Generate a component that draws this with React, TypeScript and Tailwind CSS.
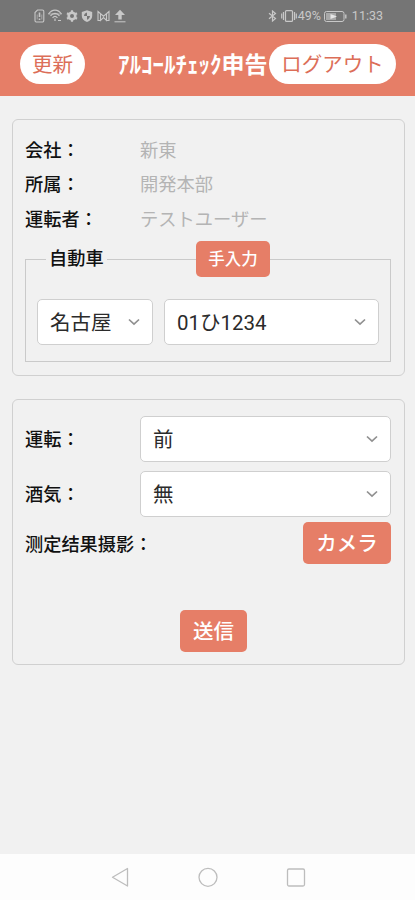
import type { ReactNode } from 'react';

interface SelectBoxProps {
  value: string;
  className?: string;
}

function SelectBox({ value, className = '' }: SelectBoxProps) {
  return (
    <button
      type="button"
      className={`flex h-[46px] items-center justify-between rounded-[5px] border border-[#cfcfcf] bg-white pl-3 pr-3 text-[20.5px] leading-none text-[#2b2b2b] ${className}`}
    >
      <span className="pt-0.5">{value}</span>
      <svg className="h-3 w-3" viewBox="0 0 12 12" fill="none" stroke="#909090" strokeWidth="1.7">
        <path d="M1 3.5 6 8.2 11 3.5" />
      </svg>
    </button>
  );
}

function Label({ children }: { children: ReactNode }) {
  return <div className="w-[115px] whitespace-nowrap pt-0.5 text-[18.2px] font-medium text-[#111]">{children}</div>;
}

const profile = [
  { label: '会社：', value: '新東' },
  { label: '所属：', value: '開発本部' },
  { label: '運転者：', value: 'テストユーザー' },
];

function StatusBar() {
  return (
    <div className="flex h-8 items-center justify-between bg-[#757575] pl-[34px] pr-8 text-[#c8c8c8]">
      <div className="flex items-center gap-[3px]">
        <svg className="h-3.5 w-[11px]" viewBox="0 0 11 14" fill="none" stroke="currentColor" strokeWidth="1.1">
          <path d="M3.5 1h4.8a1.5 1.5 0 0 1 1.5 1.5v9a1.5 1.5 0 0 1-1.5 1.5h-6A1.5 1.5 0 0 1 1 11.5V3.5z" />
          <path d="M5.5 3.5v4.5M5.5 9.5v1.5" strokeWidth="1.6" />
          <path d="M3.2 5.5v5M7.8 5.5v5" strokeWidth=".6" />
        </svg>
        <svg className="h-3.5 w-[14px]" viewBox="0 0 14 14" fill="none" stroke="currentColor" strokeWidth="1.2">
          <path d="M.5 5.2C4-.2 10-.2 13.5 5.2M2.5 7c2.5-3.6 6.5-3.6 9 0M4.6 8.8c1.4-1.8 3.4-1.8 4.8 0" />
          <path d="M.8 5h12.4" strokeWidth=".7" />
          <path d="M7 9.5v2.5M10 11.5h3" />
        </svg>
        <svg className="ml-px h-3 w-3" viewBox="0 0 12 12" fill="none" stroke="currentColor">
          <circle cx="6" cy="6" r="3.3" strokeWidth="2.6" />
          <path d="M6 .3v2M6 9.7v2M1 3.2 3 4.3M9 7.7l2 1.1M1 8.8 3 7.7M9 4.3l2-1.1" strokeWidth="2.2" />
        </svg>
        <svg className="h-3 w-3" viewBox="0 0 12 12">
          <path d="M6 .3 11.2 2v4c0 3-2 4.7-5.2 5.9C2.8 10.7.8 9 .8 6V2z" fill="currentColor" />
          <path d="M6 2.5v3.6H3C3.1 4.2 4.2 2.9 6 2.5M6 6.1h3C8.8 8 7.7 9.2 6 9.8z" fill="#757575" />
        </svg>
        <svg className="ml-px h-3 w-[13px]" viewBox="0 0 13 12" fill="none" stroke="currentColor" strokeWidth="1.1">
          <path d="M3.5 10.5H1v-9l5.5 4.7L12 1.5v9H9.5M3.5 4v6.5L6.5 7.5l3 3V4" />
        </svg>
        <svg className="ml-px h-3.5 w-3" viewBox="0 0 12 14">
          <path d="M6 .8 11 6H7.7v4.5H4.3V6H1z" fill="currentColor" />
          <path d="M.5 12.8h11" stroke="currentColor" strokeWidth="1" />
        </svg>
      </div>
      <div className="flex items-center font-[Roboto,'Liberation_Sans',sans-serif] text-[12.5px]">
        <svg className="h-3 w-[9px]" viewBox="0 0 9 12" fill="none" stroke="currentColor" strokeWidth="1.2">
          <path d="M1 3.2 7.5 8.5 4.5 11V1l3 2.5L1 8.8" />
        </svg>
        <svg className="ml-1 h-3 w-4" viewBox="0 0 16 12" fill="none" stroke="currentColor" strokeWidth="1.2">
          <rect x="4.5" y=".6" width="7" height="10.8" rx="1" />
          <path d="M2.5 2v8M.7 3.5v5M13.5 2v8M15.3 3.5v5" />
        </svg>
        <span className="ml-px">49%</span>
        <svg className="ml-[3px] h-[11px] w-[23px]" viewBox="0 0 23 11">
          <rect x=".5" y=".5" width="19.5" height="10" rx="2" fill="none" stroke="currentColor" />
          <rect x="2" y="2" width="10" height="7" fill="#a8a8a8" />
          <path d="M6.5 3 13 5.5 6.5 8z" fill="#e6e6e6" />
          <path d="M21.8 3.5v4" stroke="currentColor" strokeWidth="1.4" />
        </svg>
        <span className="ml-[5px]">11:33</span>
      </div>
    </div>
  );
}

export default function App() {
  return (
    <div className="flex h-[900px] w-[415px] flex-col overflow-hidden bg-[#f1f1f1] font-[Roboto,'Noto_Sans_CJK_JP',sans-serif]" lang="ja">
      <StatusBar />
      <header className="flex h-16 shrink-0 items-center bg-[#e67e67] pl-5 text-white">
        <button type="button" className="h-10 w-[65px] rounded-full bg-white pt-0.5 text-[20.5px] leading-none text-[#dc6e58]">
          更新
        </button>
        <h1 className="ml-[33px] w-[151px] whitespace-nowrap pt-0.5 text-[23px] font-bold leading-none">ｱﾙｺｰﾙﾁｪｯｸ申告</h1>
        <button type="button" className="h-10 w-[127px] rounded-full bg-white pt-0.5 text-[20.5px] leading-none text-[#dc6e58]">
          ログアウト
        </button>
      </header>

      <main className="flex flex-1 flex-col gap-[23px] pl-3 pr-2.5 pt-[23px]">
        <section className="h-[257px] rounded-[6px] border border-[#d0d0d0] pl-3 pr-[13px] pt-3">
          {profile.map((row) => (
            <div key={row.label} className="flex h-[34.5px] items-center">
              <Label>{row.label}</Label>
              <div className="pt-0.5 text-[18.3px] text-[#b4b4b4]">{row.value}</div>
            </div>
          ))}
          <fieldset className="mt-[5.5px] h-[121px] border border-[#cacaca] px-[11px]">
            <legend className="ml-[9px] flex w-[224px] items-center">
              <span className="px-[3px] text-[18.2px] font-medium leading-none text-[#111]">自動車</span>
              <span className="h-px flex-1 bg-[#cacaca]" />
              <button type="button" className="h-9 w-[74px] rounded-[5px] bg-[#e67e67] pt-0.5 text-[16.5px] font-medium leading-none text-white">
                手入力
              </button>
            </legend>
            <div className="mt-[22px] flex gap-[11px]">
              <SelectBox value="名古屋" className="w-[116px]" />
              <SelectBox value="01ひ1234" className="w-[215px]" />
            </div>
          </fieldset>
        </section>

        <section className="flex h-[266px] flex-col rounded-[6px] border border-[#d0d0d0] pl-3 pr-[13px] pt-4">
          <div className="flex items-center">
            <Label>運転：</Label>
            <SelectBox value="前" className="flex-1" />
          </div>
          <div className="mt-[9px] flex items-center">
            <Label>酒気：</Label>
            <SelectBox value="無" className="flex-1" />
          </div>
          <div className="mt-[5px] flex items-center justify-between">
            <Label>
              <span lang="zh-CN" className="font-['Noto_Sans_CJK_SC',sans-serif]">测定结果摄影</span>：
            </Label>
            <button type="button" className="h-[42px] w-[88px] rounded-[5px] bg-[#e67e67] pt-0.5 text-[20.5px] font-medium leading-none text-white">
              カメラ
            </button>
          </div>
          <button type="button" className="ml-[11px] mt-[46px] h-[42px] w-[67px] self-center rounded-[5px] bg-[#e67e67] pt-0.5 text-[20.5px] font-medium leading-none text-white">
            送信
          </button>
        </section>
      </main>

      <nav className="flex h-[46px] shrink-0 items-center justify-center gap-[68px] bg-[#fdfdfd]">
        <svg className="h-5 w-5" viewBox="0 0 20 20" fill="none" stroke="#bdbdbd" strokeWidth="1.3" strokeLinejoin="round">
          <path d="M17.5 1.5v17.5L2.5 10.3z" />
        </svg>
        <svg className="h-5 w-5" viewBox="0 0 20 20" fill="none" stroke="#bdbdbd" strokeWidth="1.3">
          <circle cx="10" cy="10.3" r="9" />
        </svg>
        <svg className="h-5 w-5" viewBox="0 0 20 20" fill="none" stroke="#bdbdbd" strokeWidth="1.3">
          <rect x="1.5" y="2" width="17" height="17" rx="1.5" />
        </svg>
      </nav>
    </div>
  );
}
